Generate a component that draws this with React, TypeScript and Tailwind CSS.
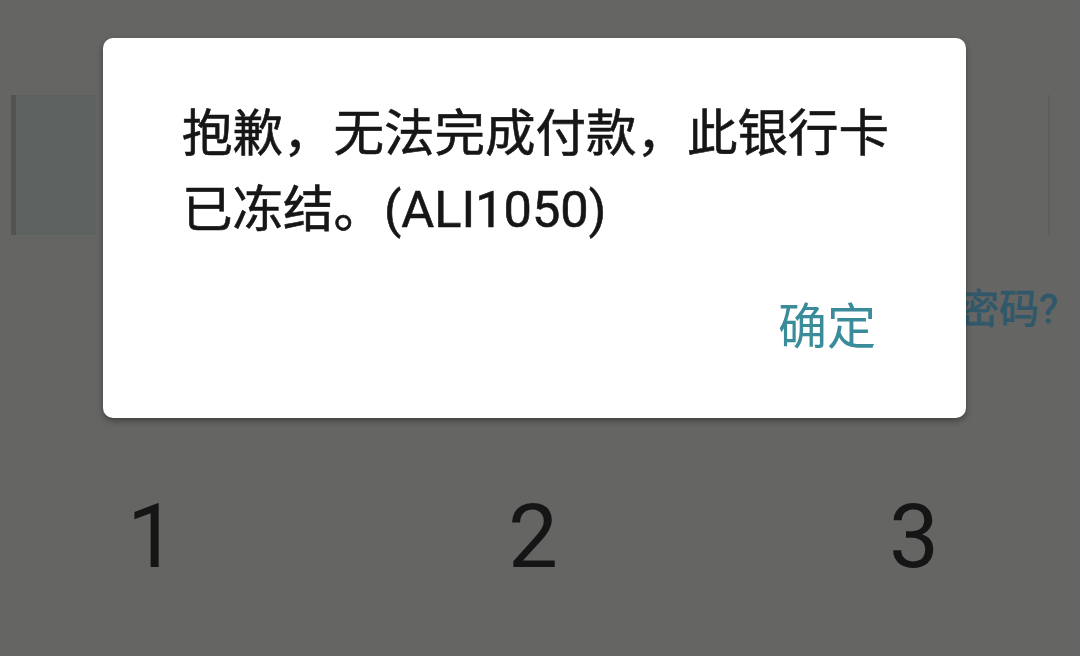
import React from "react";

const FONT = { fontFamily: 'Roboto, "Noto Sans CJK SC", sans-serif' };

function Keypad() {
  const keys = ["1", "2", "3"];
  return (
    <div className="flex items-center pl-[122px] gap-[321px] mt-[154px]">
      {keys.map((k) => (
        <span
          key={k}
          className="w-[60px] text-center text-[89px] leading-[96px] font-normal text-[#151515]"
        >
          {k}
        </span>
      ))}
    </div>
  );
}

function ErrorDialog() {
  return (
    <div className="absolute left-[103px] top-[38px] w-[863px] h-[380px] bg-white rounded-[10px] shadow-[0_3px_6px_rgba(0,0,0,0.35)] flex flex-col">
      <div className="pt-[58px] pl-[79px] pr-[50px] text-[50.5px] leading-[76px] text-[#161616] [-webkit-text-stroke:0.6px_#161616]">
        <div>抱歉，无法完成付款，此银行卡</div>
        <div>已冻结。(ALI1050)</div>
      </div>
      <div className="flex justify-end pr-[90px] mt-[50px]">
        <button className="text-[49px] leading-[60px] text-[#3a8c9b]">确定</button>
      </div>
    </div>
  );
}

export default function App() {
  return (
    <div
      className="relative w-[1080px] h-[656px] overflow-hidden bg-[#656563]"
      style={FONT}
    >
      {/* page behind the overlay */}
      <div className="flex flex-col">
        <div className="mt-[95px] ml-[11px] mr-[30px] h-[140px] flex border-r-2 border-[#5c5e5c]">
          <div className="w-[5px] bg-[#525452]" />
          <div className="w-[80px] bg-[#5d6160]" />
        </div>
        <div className="flex justify-end pr-[22px] mt-[50px]">
          <span className="text-[40px] leading-[50px] text-[#30586a] [-webkit-text-stroke:0.8px_#30586a]">
            忘记密码?
          </span>
        </div>
        <Keypad />
      </div>
      <ErrorDialog />
    </div>
  );
}
